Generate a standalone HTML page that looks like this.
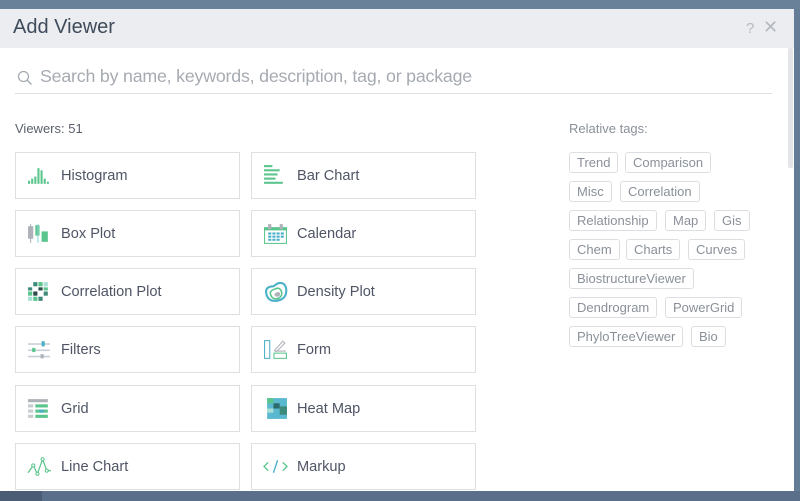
<!DOCTYPE html>
<html><head><style>
*{margin:0;padding:0;box-sizing:border-box}
body{width:800px;height:501px;overflow:hidden;background:#647c96;font-family:"Liberation Sans",sans-serif;position:relative}
.topbar{position:absolute;left:0;top:0;width:800px;height:9px;background:#6a8299}
.bottombar{position:absolute;left:0;top:491px;width:800px;height:10px;background:#5a708a}
.bottombar .l{position:absolute;left:0;top:0;width:42px;height:10px;background:#4a5d75}
.dlg{position:absolute;left:0;top:9px;width:794px;height:482px;background:#fff;overflow:hidden}
.hdr{height:39px;background:#ebedf0;position:relative}
.hdr .t{position:absolute;left:13px;top:7px;font-size:20px;color:#3f4b5b}
.hdr .q{position:absolute;left:746px;top:11px;font-size:15px;color:#b5b9bf}
.hdr .x{position:absolute;left:763px;top:8px;font-size:18px;color:#b5b9bf}
.search{position:absolute;left:15px;top:55px;width:757px;height:30px;border-bottom:1px solid #dcdfe3}
.search span{position:absolute;left:25px;top:2px;font-size:17.8px;color:#a6abb2;letter-spacing:-0.2px}
.cnt{position:absolute;left:15px;top:112px;font-size:13px;color:#5a606b}
.rel{position:absolute;left:569px;top:112px;font-size:13px;color:#8a9099}
.card{position:absolute;width:225px;height:47px;border:1px solid #dedfe2;font-size:14.6px;color:#4f5565}
.card .ic{position:absolute;left:11px;top:12px;width:25px;height:21px}
.card .lb{position:absolute;left:45px;top:15px}
.tag{position:absolute;height:21px;border:1px solid #dcdee2;border-radius:3px;font-size:13px;color:#8a9099;padding:2px 7px 0 7px;white-space:nowrap}
.sb{position:absolute;left:788px;top:39px;width:5px;height:120px;background:#e3e5e8;border-radius:2px}
</style></head><body>
<div class="topbar"></div>
<div class="bottombar"><div class="l"></div></div>
<div class="dlg">
<div class="hdr"><span class="t">Add Viewer</span><span class="q">?</span><span class="x">✕</span></div>
<div class="sb"></div>
<div class="search"><svg style="position:absolute;left:2px;top:6px" width="16" height="16" viewBox="0 0 16 16"><circle cx="6.5" cy="6.5" r="5" fill="none" stroke="#a6abb2" stroke-width="1.3"/><path d="M10 10l4.5 4.5" stroke="#a6abb2" stroke-width="1.4"/></svg><span>Search by name, keywords, description, tag, or package</span></div>
<div class="cnt">Viewers: 51</div>
<div class="rel">Relative tags:</div>

<div class="card" style="left:15px;top:143px"><svg class="ic" viewBox="0 0 24 20"><g fill="#5ac58c"><rect x="1" y="15" width="2" height="3"/><rect x="4" y="13" width="2" height="5"/><rect x="7" y="11" width="2" height="7"/><rect x="10" y="3" width="2" height="15"/><rect x="13" y="5" width="2" height="13"/><rect x="16" y="13" width="2" height="5"/><rect x="19" y="16" width="2" height="2"/></g></svg><span class="lb">Histogram</span></div>
<div class="card" style="left:251px;top:143px"><svg class="ic" viewBox="0 0 24 20"><g fill="#5ac58c"><rect x="1" y="0" width="8" height="2"/><rect x="1" y="4" width="15" height="2"/><rect x="1" y="8" width="13" height="2"/><rect x="1" y="12" width="11" height="2"/><rect x="1" y="16" width="18" height="2"/></g></svg><span class="lb">Bar Chart</span></div>

<div class="card" style="left:15px;top:201px"><svg class="ic" viewBox="0 0 24 20"><rect x="1" y="3" width="5" height="12" fill="#aeb1b8"/><rect x="3" y="1" width="1" height="18" fill="#aeb1b8"/><rect x="8" y="2" width="4" height="10" fill="#5ac58c"/><rect x="10" y="1" width="1" height="18" fill="#8ad4d4"/><rect x="14" y="8" width="6" height="10" fill="#5ac58c"/></svg><span class="lb">Box Plot</span></div>
<div class="card" style="left:251px;top:201px"><svg class="ic" viewBox="0 0 24 20"><rect x="1.5" y="4.5" width="21" height="15" fill="none" stroke="#5ac58c"/><rect x="1" y="4" width="22" height="3" fill="#5ac58c"/><rect x="5" y="1" width="3" height="5" fill="#aeb1b8"/><rect x="16" y="1" width="3" height="5" fill="#aeb1b8"/><g fill="#4ab0c8"><rect x="5" y="9" width="3" height="2"/><rect x="9" y="9" width="3" height="2"/><rect x="13" y="9" width="3" height="2"/><rect x="17" y="9" width="3" height="2"/><rect x="5" y="12" width="3" height="2"/><rect x="9" y="12" width="3" height="2"/><rect x="13" y="12" width="3" height="2"/><rect x="17" y="12" width="3" height="2"/><rect x="5" y="15" width="3" height="2"/><rect x="9" y="15" width="3" height="2"/><rect x="13" y="15" width="3" height="2"/></g></svg><span class="lb">Calendar</span></div>

<div class="card" style="left:15px;top:259px"><svg class="ic" viewBox="0 0 24 20"><rect x="6" y="1" width="4" height="4" fill="#3e8a7a"/><rect x="11" y="1" width="4" height="4" fill="#5ac58c"/><rect x="16" y="1" width="4" height="4" fill="#a8e0d8"/><rect x="1" y="6" width="4" height="3" fill="#3e8a7a"/><rect x="11" y="6" width="4" height="3" fill="#2d4a4a"/><rect x="16" y="6" width="4" height="3" fill="#5ac58c"/><rect x="1" y="10" width="4" height="4" fill="#5ac58c"/><rect x="6" y="10" width="4" height="4" fill="#2d4a4a"/><rect x="16" y="10" width="4" height="4" fill="#3e8a7a"/><rect x="1" y="15" width="4" height="4" fill="#a8e0d8"/><rect x="6" y="15" width="4" height="4" fill="#5ac58c"/><rect x="11" y="15" width="4" height="4" fill="#3e8a7a"/></svg><span class="lb">Correlation Plot</span></div>
<div class="card" style="left:251px;top:259px"><svg class="ic" viewBox="0 0 24 20"><path d="M3 10c0-4 4-5 7-5 3-2 5-4 8-3 4 1 5 6 4 10-1 5-6 7-11 7C6 19 3 15 3 10z" fill="none" stroke="#4ab0c8" stroke-width="2"/><path d="M7 11c1-3 4-3 6-4 3-1 5 2 5 5 0 3-3 5-6 5-3 0-5-3-5-6z" fill="none" stroke="#5ac58c" stroke-width="1.5"/><path d="M11 13c1-2 3-3 5-2 1 2 0 4-2 4-2 0-3-1-3-2z" fill="#aeb1b8"/></svg><span class="lb">Density Plot</span></div>

<div class="card" style="left:15px;top:317px"><svg class="ic" viewBox="0 0 24 20"><g fill="#c5ced6"><rect x="1" y="4" width="21" height="1.5"/><rect x="1" y="10" width="21" height="1.5"/><rect x="1" y="16" width="21" height="1.5"/></g><rect x="14" y="2" width="3" height="5" fill="#4ab0c8"/><rect x="5" y="8.5" width="3" height="4" fill="#5ac58c"/><rect x="13" y="14.5" width="3" height="4" fill="#aeb1b8"/></svg><span class="lb">Filters</span></div>
<div class="card" style="left:251px;top:317px"><svg class="ic" viewBox="0 0 24 20"><rect x="1.5" y="1.5" width="5" height="17" fill="none" stroke="#4ab0c8"/><rect x="10.5" y="13.5" width="12" height="5" fill="none" stroke="#5ac58c"/><path d="M11 11l8-9 2 2-8 8z M11 11.5h11" fill="none" stroke="#aeb1b8"/></svg><span class="lb">Form</span></div>

<div class="card" style="left:15px;top:376px"><svg class="ic" viewBox="0 0 24 20"><rect x="1" y="1" width="19" height="3" fill="#aeb1b8"/><g fill="#5ac58c"><rect x="8" y="6" width="12" height="3"/><rect x="8" y="11" width="12" height="3"/><rect x="8" y="16" width="12" height="3"/></g><g fill="#c8cbd0"><rect x="1" y="6" width="5" height="3"/><rect x="1" y="11" width="5" height="3"/><rect x="1" y="16" width="5" height="3"/></g><rect x="12" y="11" width="4" height="3" fill="#4ab0c8"/></svg><span class="lb">Grid</span></div>
<div class="card" style="left:251px;top:376px"><svg class="ic" viewBox="0 0 24 20"><rect x="4" y="0" width="19" height="20" fill="#5ab8d0"/><rect x="4" y="0" width="6" height="5" fill="#5ac58c"/><rect x="10" y="5" width="6" height="5" fill="#2d6a6a"/><rect x="16" y="8" width="7" height="8" fill="#3e8a7a"/><rect x="4" y="10" width="6" height="4" fill="#a8e0d8"/></svg><span class="lb">Heat Map</span></div>

<div class="card" style="left:15px;top:434px"><svg class="ic" viewBox="0 0 24 20"><path d="M1 16l5-7 4 8 5-14 4 11 4 0" fill="none" stroke="#5ac58c" stroke-width="1.2"/><g fill="#fff" stroke="#5ac58c"><circle cx="6" cy="9" r="1.5"/><circle cx="10" cy="17" r="1.5"/><circle cx="15" cy="3" r="1.5"/><circle cx="19" cy="14" r="1.5"/></g></svg><span class="lb">Line Chart</span></div>
<div class="card" style="left:251px;top:434px"><svg class="ic" viewBox="0 0 24 20"><path d="M5 6l-4 4 4 4M19 6l4 4-4 4" fill="none" stroke="#5ac58c" stroke-width="1.3"/><path d="M14 4l-4 12" stroke="#4ab0c8" stroke-width="1.3"/></svg><span class="lb">Markup</span></div>

<div class="tag" style="left:569px;top:143px">Trend</div>
<div class="tag" style="left:625px;top:143px">Comparison</div>
<div class="tag" style="left:569px;top:172px">Misc</div>
<div class="tag" style="left:620px;top:172px">Correlation</div>
<div class="tag" style="left:569px;top:201px">Relationship</div>
<div class="tag" style="left:665px;top:201px">Map</div>
<div class="tag" style="left:714px;top:201px">Gis</div>
<div class="tag" style="left:569px;top:230px">Chem</div>
<div class="tag" style="left:626px;top:230px">Charts</div>
<div class="tag" style="left:688px;top:230px">Curves</div>
<div class="tag" style="left:569px;top:259px">BiostructureViewer</div>
<div class="tag" style="left:569px;top:288px">Dendrogram</div>
<div class="tag" style="left:665px;top:288px">PowerGrid</div>
<div class="tag" style="left:569px;top:317px">PhyloTreeViewer</div>
<div class="tag" style="left:691px;top:317px">Bio</div>
</div>
</body></html>
